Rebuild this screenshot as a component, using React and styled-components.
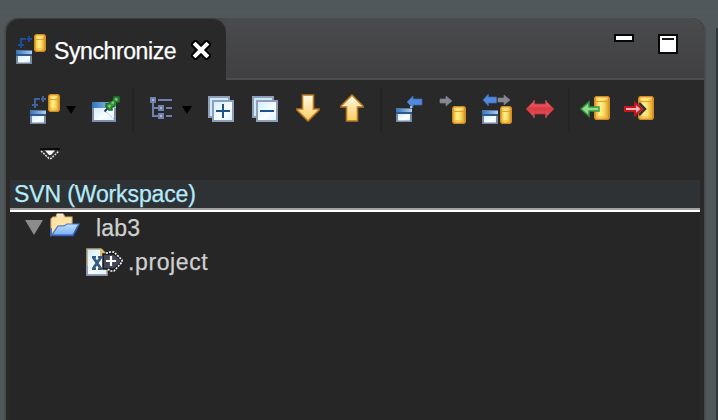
import React from "react";
import styled, { createGlobalStyle } from "styled-components";

const GlobalStyle = createGlobalStyle`
  * { box-sizing: border-box; }
  body { margin: 0; background: #51585b; overflow: hidden; }
  svg { display: block; flex: none; }
`;

const Workbench = styled.div`
  display: flex;
  align-items: stretch;
  justify-content: space-between;
  width: 718px;
  height: 420px;
  padding: 18px 0 0 4px;
  background: linear-gradient(#51585b 0 11px, #5a5957 11px 12px, #51585b 12px);
  font-family: "Liberation Sans", Arial, sans-serif;
  font-size: 23px;
  -webkit-text-stroke: 0.25px currentColor;
`;

const View = styled.section`
  display: flex;
  flex-direction: column;
  width: 702px;
  border: solid #4a4b4c;
  border-width: 0 2px;
  border-radius: 14px 14px 0 0;
  background: #292929;
  overflow: hidden;
`;

const Neighbour = styled.div`
  width: 2px;
  margin-top: 10px;
  background: #303639;
  overflow: hidden;
`;

const TabBar = styled.header`
  display: flex;
  height: 62px;
  flex: none;
`;

const TabGroup = styled.div`
  display: flex;
  width: 220px;
  background: #49494b;
`;

const Tab = styled.div`
  display: flex;
  align-items: flex-start;
  width: 220px;
  padding: 15px 0 0 10px;
  border-top: 1px solid #3b3d3e;
  border-radius: 14px 14px 0 0;
  background: #292929;
  color: #fff;
`;

const TabTitle = styled.span`
  width: 123px;
  margin: 4px 0 0 8px;
  line-height: 26px;
  white-space: nowrap;
  letter-spacing: -0.4px;
`;

const CloseIcon = styled.svg`
  margin: 6px 0 0 14px;
`;

const TabStrip = styled.div`
  display: flex;
  flex: 1;
  align-items: flex-start;
  justify-content: flex-end;
  gap: 24px;
  padding: 16px 26px 0 0;
  border-bottom: 2px solid #4b4c4e;
  background: linear-gradient(#4a4b4d, #404042);
`;

const Toolbar = styled.div`
  display: flex;
  flex: none;
  align-items: center;
  height: 58px;
  padding-left: 24px;
`;

const ToolItem = styled.div`
  display: flex;
  align-items: flex-start;
  width: ${(p) => p.$width || 32}px;
  height: 32px;
  padding-top: ${(p) => p.$drop}px;
  margin-left: ${(p) => p.$gap || 0}px;
  flex: none;
`;

const Caret = styled.i`
  width: 0;
  height: 0;
  margin: 2px 0 0 ${(p) => p.$gap}px;
  border: 5px solid transparent;
  border-top: 8px solid #000;
  border-bottom: 0;
`;

const Separator = styled.i`
  width: 2px;
  height: 44px;
  margin: 0 0 0 ${(p) => p.$gap}px;
  background: #242424;
`;

const MenuRow = styled.div`
  height: 42px;
  flex: none;
  padding: 10px 0 0 34px;
`;

const TreeHeading = styled.h1`
  height: 32px;
  margin: 0 4px;
  padding-left: 4px;
  flex: none;
  border-bottom: 2px solid #fff;
  box-shadow: inset 0 -2px #a3a09e;
  background: #2e3235;
  color: #b4ebfb;
  font-size: 23px;
  font-weight: 400;
  line-height: 29px;
  letter-spacing: -0.12px;
  white-space: nowrap;
`;

const Tree = styled.div`
  flex: 1;
  margin: 0 4px;
  background: #262626;
  color: #d0d0d0;
`;

const TreeRow = styled.div`
  display: flex;
  align-items: flex-start;
  height: 34px;
  padding-left: ${(p) => p.$indent}px;
`;

const TreeGlyph = styled.span`
  margin: ${(p) => p.$drop}px 0 0 ${(p) => p.$gap || 0}px;
  flex: none;
`;

const TreeLabel = styled.span`
  margin-left: ${(p) => p.$gap}px;
  line-height: 32px;
  letter-spacing: ${(p) => p.$tracking}px;
  white-space: nowrap;
`;

function Gradients() {
  return (
    <svg width="2" height="2">
      <defs>
        <linearGradient id="gold">
          <stop offset="0" stopColor="#f0aa24" />
          <stop offset=".35" stopColor="#fff08c" />
          <stop offset=".6" stopColor="#fde069" />
          <stop offset="1" stopColor="#dc9420" />
        </linearGradient>
        <linearGradient id="paper" x2="1" y2="1">
          <stop offset="0" stopColor="#d2ecfb" />
          <stop offset=".6" stopColor="#fafeff" />
          <stop offset="1" stopColor="#d9f1fc" />
        </linearGradient>
        <linearGradient id="titlebar">
          <stop offset="0" stopColor="#2f74c0" />
          <stop offset="1" stopColor="#b4cfe4" />
        </linearGradient>
        <linearGradient id="arrow" x2="0" y2="1">
          <stop offset="0" stopColor="#fffbe9" />
          <stop offset="1" stopColor="#fccb60" />
        </linearGradient>
        <linearGradient id="folder" x2="0" y2="1">
          <stop offset="0" stopColor="#bfe0ff" />
          <stop offset="1" stopColor="#78b0f3" />
        </linearGradient>
        <linearGradient id="red" x2="0" y2="1">
          <stop offset="0" stopColor="#ee6e70" />
          <stop offset=".5" stopColor="#d93b43" />
          <stop offset="1" stopColor="#e2575c" />
        </linearGradient>
      </defs>
    </svg>
  );
}

const Cylinder = ({ x, y, w = 12, h = 18 }) => (
  <g transform={`translate(${x} ${y})`}>
    <path
      d={`M2 .7H${w - 2}L${w - 0.7} 2V${h - 2}L${w - 2} ${h - 0.7}H2L.7 ${h - 2}V2Z`}
      fill="url(#gold)"
      stroke="#d08c22"
      strokeWidth="1.400"
    />
    <path d={`M2 5.500H${w - 2}`} stroke="#e0a030" strokeWidth="1" />
    <path d={`M2.500 2.500H${w - 2.5}`} stroke="#ffdf78" strokeWidth="1.500" />
    <path d={`M2 ${h - 3}H${w - 2}`} stroke="#eeb136" strokeWidth="1" />
  </g>
);

const MiniWindow = ({ x, y, w = 16 }) => (
  <g transform={`translate(${x} ${y})`}>
    <rect width={w} height="14" fill="#7888a3" />
    <rect width={w} height="4" fill="url(#titlebar)" />
    <rect width={w} height="1" fill="#5879a3" />
    <rect y="4" width={w} height="2" fill="#31588f" />
    <rect x="2" y="6" width={w - 4} height="6.500" fill="url(#paper)" />
  </g>
);

const SyncIcon = ({ stroke = "#41629b" }) => (
  <svg width="30" height="30">
    <path d="M5 14V5H10M11 5H16M13 2V8M2 11H8" fill="none" stroke={stroke} strokeWidth="2" />
    <Cylinder x={18} y={0} />
    <MiniWindow x={0} y={16} />
  </svg>
);

const PinIcon = () => (
  <svg width="30" height="28">
    <rect x="2" y="6" width="24" height="20" fill="#8090ac" />
    <rect x="2" y="6" width="24" height="6" fill="url(#titlebar)" />
    <rect x="4" y="12" width="20" height="12" fill="url(#paper)" />
    <path d="M16 16l8 7" stroke="#a9c5de" strokeDasharray="2 1" />
    <path d="M14.500 15.500l3-3" stroke="#17337a" strokeWidth="2" />
    <path d="M16 7.500h3l1-1.500h3l1-5h5v5h-4v4l-3 1v3h-3l-3-3Z" fill="#39943b" stroke="#1b7330" strokeWidth="1.500" />
    <path d="M18.500 11L27 2.500" stroke="#7dc263" strokeWidth="2.500" strokeDasharray="2.800 2" />
  </svg>
);

const HierarchyIcon = () => (
  <svg width="24" height="24" fill="none" stroke="#6f81ac" strokeWidth="2">
    <path d="M3 6V19H8M3 11H8M8 3H22M16 11H22M16 19H22" />
    <path d="M1 1h4v4H1ZM9 9h4v4H9ZM9 17h4v4H9Z" fill="#a9b7d4" />
  </svg>
);

const BoxIcon = ({ plus }) => (
  <svg width="28" height="28" x="0" stroke="#8e9eb9" strokeWidth="2">
    <path d="M3 1H21V21H3Z" transform="translate(-2 0)" fill="#cce9f5" />
    <path d="M1 1H21V21H1Z" fill="#cce9f5" />
    <path d="M5 5H25V25H5Z" fill="url(#paper)" />
    <path d={plus ? "M8 15H22M15 8V22" : "M8 15H22"} stroke="#1c548c" />
  </svg>
);

const VerticalArrow = ({ up }) => (
  <svg width="24" height="28">
    <path
      d={up ? "M12 1L23 12V13H17.500V27H6.500V13H1V12Z" : "M6.500 1H17.500V15H23V16L12 27L1 16V15H6.500Z"}
      fill="url(#arrow)"
      stroke="#b9771d"
      strokeWidth="1.600"
    />
  </svg>
);

const BlueArrow = "M0 6L6 0V3H15V9H6V12Z";
const GreyArrow = "M0 3H6V0L12 5L6 10V7H0Z";

const IncomingIcon = () => (
  <svg width="28" height="28">
    <path d={BlueArrow} transform="translate(11 1)" fill="#5389dc" stroke="#3d69ae" strokeWidth=".8" />
    <path d="M15 11v3" stroke="#a9bad1" strokeWidth="2" />
    <MiniWindow x={0} y={13} />
  </svg>
);

const OutgoingIcon = () => (
  <svg width="28" height="30">
    <path d={GreyArrow} transform="translate(1 0)" fill="#858891" stroke="#858891" strokeWidth=".6" />
    <Cylinder x={13} y={10} w={14} h={18} />
  </svg>
);

const BothIcon = () => (
  <svg width="32" height="30">
    <path d={BlueArrow} transform="translate(1 0) scale(.9 1)" fill="#5389dc" stroke="#3d69ae" strokeWidth=".8" />
    <path d={GreyArrow} transform="translate(16 1)" fill="#858891" stroke="#858891" strokeWidth=".6" />
    <MiniWindow x={0} y={16} />
    <Cylinder x={18} y={12} w={12} h={18} />
  </svg>
);

const ConflictIcon = () => (
  <svg width="28" height="20">
    <path d="M0 10L8 2V5H20V2L28 10L20 18V15H8V18Z" fill="url(#red)" stroke="#b7343d" strokeWidth=".8" />
    <path d="M8 1V5M20 1V5M8 15V19M20 15V19" stroke="#ce5a60" />
  </svg>
);

const UpdateIcon = () => (
  <svg width="30" height="26">
    <Cylinder x={14} y={0} w={16} h={24} />
    <path d="M1 13L9 6V11H19V15H9V20Z" fill="#91dc88" stroke="#379542" strokeWidth="1.500" />
  </svg>
);

const CommitIcon = () => (
  <svg width="30" height="26">
    <Cylinder x={14} y={0} w={16} h={24} />
    <path d="M15 7L21 13L15 19" fill="none" stroke="#343139" strokeWidth="2.500" />
    <path d="M1 11H11V7L18 13L11 19V15H1Z" fill="#f5b4b5" stroke="#c9141c" strokeWidth="2" />
  </svg>
);

const ViewMenuIcon = () => (
  <svg width="20" height="12">
    <path d="M1 2H19L10 11Z" fill="#333" />
    <path d="M1 3L9 10.500H11L19 3" fill="none" stroke="#ddd" strokeWidth="1.500" strokeDasharray="2 1" />
    <path d="M0 1H20" stroke="#000" strokeWidth="1.500" />
    <path d="M5 2.500H15L11 7H9Z" fill="#f8f8f8" />
  </svg>
);

const FolderIcon = () => (
  <svg width="30" height="24">
    <path d="M1 22V6L3 4H6L7 1H13L15 4H22V12L8 13Z" fill="#ffe4a7" stroke="#dcb26b" strokeWidth="1.200" />
    <path d="M7 2H13" stroke="#eeeae2" strokeWidth="2.500" />
    <path d="M2 22L8 13H14L17 11H29L23 22Z" fill="url(#folder)" stroke="#4a78cc" strokeWidth="1.200" />
    <path d="M1 15V22.500H23L28 13" fill="none" stroke="#3560bd" strokeWidth="1.600" />
  </svg>
);

const FileIcon = () => (
  <svg width="38" height="28">
    <path d="M1 1H15L21 7V27H1Z" fill="url(#paper)" stroke="#b5a883" strokeWidth="1.600" />
    <path d="M1 17V27H21" fill="none" stroke="#8799bd" strokeWidth="1.600" />
    <path d="M14 1H16L21 8H14Z" fill="#dfbd71" />
    <path d="M7 9L15 21M15 9L7 21" stroke="#355c7c" strokeWidth="2.800" />
    <path d="M6 9H10M12 9H16M6 21H10M12 21H16" stroke="#355c7c" strokeWidth="1.800" />
    <path d="M17 6H28L35 12V14L28 21H17Z" fill="#454859" stroke="#15171c" strokeWidth="1.500" />
    <path d="M20 5H22L24 4H28L36 12V14L28 23H24L22 21" fill="none" stroke="#fff" strokeWidth="1.600" strokeDasharray="2 1.200" />
    <path d="M20 13H30M25 8V18" stroke="#fff" strokeWidth="2.200" />
  </svg>
);

export default function App() {
  return (
    <Workbench>
      <GlobalStyle />
      <View>
        <TabBar>
          <TabGroup>
            <Tab>
              <SyncIcon stroke="#1e4c99" />
              <TabTitle>Synchronize</TabTitle>
              <CloseIcon width="20" height="20">
                <path d="M4.500 4.500L15.500 15.500M15.500 4.500L4.500 15.500" stroke="#000" strokeWidth="8" strokeLinecap="square" />
                <path d="M4.500 4.500L15.500 15.500M15.500 4.500L4.500 15.500" stroke="#fff" strokeWidth="4" strokeLinecap="square" />
              </CloseIcon>
            </Tab>
          </TabGroup>
          <TabStrip>
            <svg width="20" height="8">
              <rect x="1" y="1" width="18" height="6" fill="#fff" stroke="#080808" strokeWidth="2" />
            </svg>
            <svg width="20" height="20">
              <rect x="1" y="1" width="18" height="18" fill="#fff" stroke="#080808" strokeWidth="2" />
              <path d="M4 5H16" stroke="#171717" strokeWidth="2" />
            </svg>
          </TabStrip>
        </TabBar>
        <Toolbar>
          <ToolItem $drop={1} $width={30}><SyncIcon /></ToolItem>
          <Caret $gap={6} />
          <ToolItem $drop={3} $gap={14}><PinIcon /></ToolItem>
          <Separator $gap={10} />
          <ToolItem $drop={4} $gap={16} $width={24}><HierarchyIcon /></ToolItem>
          <Caret $gap={8} />
          <ToolItem $drop={3} $gap={16}><BoxIcon plus /></ToolItem>
          <ToolItem $drop={3} $gap={12}><BoxIcon /></ToolItem>
          <ToolItem $drop={1} $gap={12}><VerticalArrow /></ToolItem>
          <ToolItem $drop={1} $gap={12}><VerticalArrow up /></ToolItem>
          <Separator $gap={8} />
          <ToolItem $drop={2} $gap={14}><IncomingIcon /></ToolItem>
          <ToolItem $drop={3} $gap={11}><OutgoingIcon /></ToolItem>
          <ToolItem $drop={1} $gap={11}><BothIcon /></ToolItem>
          <ToolItem $drop={6} $gap={12}><ConflictIcon /></ToolItem>
          <Separator $gap={10} />
          <ToolItem $drop={3} $gap={10}><UpdateIcon /></ToolItem>
          <ToolItem $drop={3} $gap={12}><CommitIcon /></ToolItem>
        </Toolbar>
        <MenuRow><ViewMenuIcon /></MenuRow>
        <TreeHeading>SVN (Workspace)</TreeHeading>
        <Tree>
          <TreeRow $indent={15}>
            <TreeGlyph $drop={8}>
              <svg width="18" height="15"><path d="M0 0H18L9 15Z" fill="#8b8b8b" /></svg>
            </TreeGlyph>
            <TreeGlyph $drop={1} $gap={7}><FolderIcon /></TreeGlyph>
            <TreeLabel $gap={16} $tracking={0.15}>lab3</TreeLabel>
          </TreeRow>
          <TreeRow $indent={76}>
            <TreeGlyph $drop={2}><FileIcon /></TreeGlyph>
            <TreeLabel $gap={4} $tracking={0.6}>.project</TreeLabel>
          </TreeRow>
        </Tree>
      </View>
      <Neighbour><Gradients /></Neighbour>
    </Workbench>
  );
}
